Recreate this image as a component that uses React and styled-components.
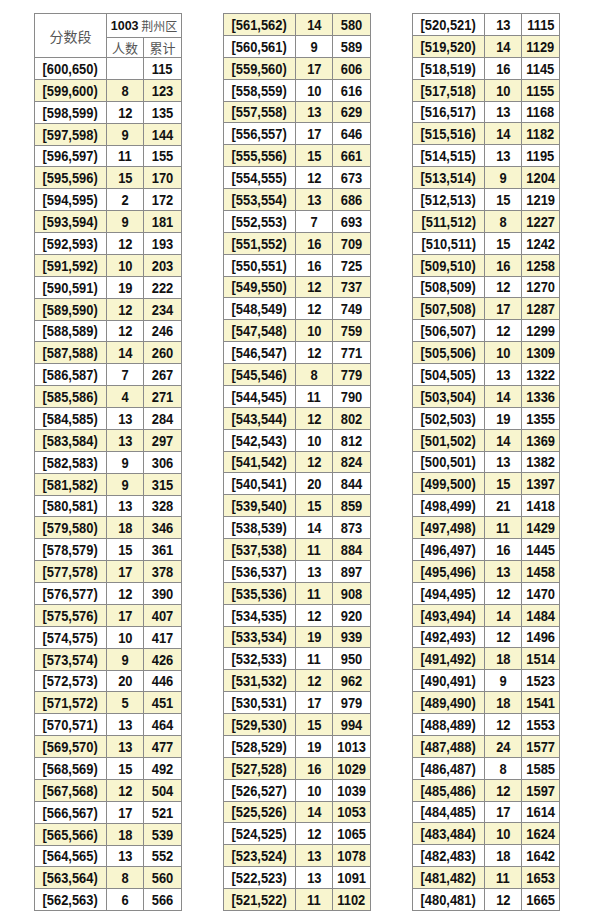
import React from "react";
import styled, { createGlobalStyle } from "styled-components";

const GlobalStyle = createGlobalStyle`
  html, body {
    margin: 0;
    padding: 0;
    background: #ffffff;
  }
  body {
    font-family: "Liberation Sans", Arial, sans-serif;
  }
`;

// counts per score band, cumulative is summed as we go
const COL1 = [
  [600, 650, null], [599, 600, 8], [598, 599, 12], [597, 598, 9], [596, 597, 11],
  [595, 596, 15], [594, 595, 2], [593, 594, 9], [592, 593, 12], [591, 592, 10],
  [590, 591, 19], [589, 590, 12], [588, 589, 12], [587, 588, 14], [586, 587, 7],
  [585, 586, 4], [584, 585, 13], [583, 584, 13], [582, 583, 9], [581, 582, 9],
  [580, 581, 13], [579, 580, 18], [578, 579, 15], [577, 578, 17], [576, 577, 12],
  [575, 576, 17], [574, 575, 10], [573, 574, 9], [572, 573, 20], [571, 572, 5],
  [570, 571, 13], [569, 570, 13], [568, 569, 15], [567, 568, 12], [566, 567, 17],
  [565, 566, 18], [564, 565, 13], [563, 564, 8], [562, 563, 6],
];

const COUNTS2 = [
  14, 9, 17, 10, 13, 17, 15, 12, 13, 7, 16, 16, 12, 12, 10, 12, 8, 11, 12, 10,
  12, 20, 15, 14, 11, 13, 11, 12, 19, 11, 12, 17, 15, 19, 16, 10, 14, 12, 13, 13, 11,
];

const COUNTS3 = [
  13, 14, 16, 10, 13, 14, 13, 9, 15, 8, 15, 16, 12, 17, 12, 10, 13, 14, 19, 14,
  13, 15, 21, 11, 16, 13, 12, 14, 12, 18, 9, 18, 12, 24, 8, 12, 17, 10, 18, 11, 12,
];

function buildRows() {
  let total = 115;
  const first = COL1.map(([lo, hi, n], i) => {
    if (i > 0) total += n;
    return { lo, hi, n, total };
  });
  const make = (start, counts) =>
    counts.map((n, i) => {
      total += n;
      return { lo: start - i, hi: start - i + 1, n, total };
    });
  const second = make(561, COUNTS2);
  const third = make(520, COUNTS3);
  return [first, second, third];
}

function ScoreTable({ rows, withHeader }) {
  return (
    <Grid $header={withHeader}>
      {withHeader && (
        <>
          <HeadCell $rows={2} $size={14}>分数段</HeadCell>
          <HeadCell $cols={2} $size={12}>
            <Code>1003</Code>&nbsp;荆州区
          </HeadCell>
          <HeadCell $size={13}>人数</HeadCell>
          <HeadCell $size={13}>累计</HeadCell>
        </>
      )}
      {rows.map((r) => {
        const marked = r.lo % 2 === 1;
        return (
          <React.Fragment key={r.lo}>
            <Cell $marked={marked}>
              <Value>[{r.lo},{r.hi})</Value>
            </Cell>
            <Cell $marked={marked}>
              <Value>{r.n ?? ""}</Value>
            </Cell>
            <Cell $marked={marked}>
              <Value>{r.total}</Value>
            </Cell>
          </React.Fragment>
        );
      })}
    </Grid>
  );
}

export default function App() {
  const [a, b, c] = buildRows();
  return (
    <>
      <GlobalStyle />
      <Page>
        <ScoreTable rows={a} withHeader />
        <ScoreTable rows={b} />
        <ScoreTable rows={c} />
      </Page>
    </>
  );
}

const Page = styled.div`
  display: flex;
  gap: 41px;
  padding: 13px 0 0 34px;
  width: 600px;
  height: 920px;
  box-sizing: border-box;
`;

const Grid = styled.div`
  display: grid;
  grid-template-columns: 72px 37px 38px;
  grid-template-rows: ${(p) => (p.$header ? "24px 20px" : "none")};
  grid-auto-rows: 21.88px;
  border-top: 1px solid #8a8a8a;
  border-left: 1px solid #8a8a8a;
  align-self: flex-start;
`;

const Cell = styled.div`
  box-sizing: border-box;
  display: flex;
  align-items: center;
  justify-content: center;
  border-right: 1px solid #8a8a8a;
  border-bottom: 1px solid #8a8a8a;
  background: ${(p) => (p.$marked ? "#f8f5cf" : "#ffffff")};
  color: #111;
  white-space: nowrap;
`;

/* condensed look: the source table uses a narrow bold face */
const Value = styled.span`
  display: inline-block;
  font-family: "Liberation Sans", Arial, sans-serif;
  font-weight: 700;
  font-size: 15px;
  transform: scaleX(0.86);
`;

const HeadCell = styled(Cell)`
  grid-row: span ${(p) => p.$rows || 1};
  grid-column: span ${(p) => p.$cols || 1};
  font-family: "Noto Sans CJK SC", "Liberation Sans", sans-serif;
  font-weight: 400;
  font-size: ${(p) => p.$size}px;
  color: #555;
`;

const Code = styled.span`
  font-family: "Liberation Sans", Arial, sans-serif;
  font-weight: 700;
  font-size: 12.5px;
  color: #111;
`;
